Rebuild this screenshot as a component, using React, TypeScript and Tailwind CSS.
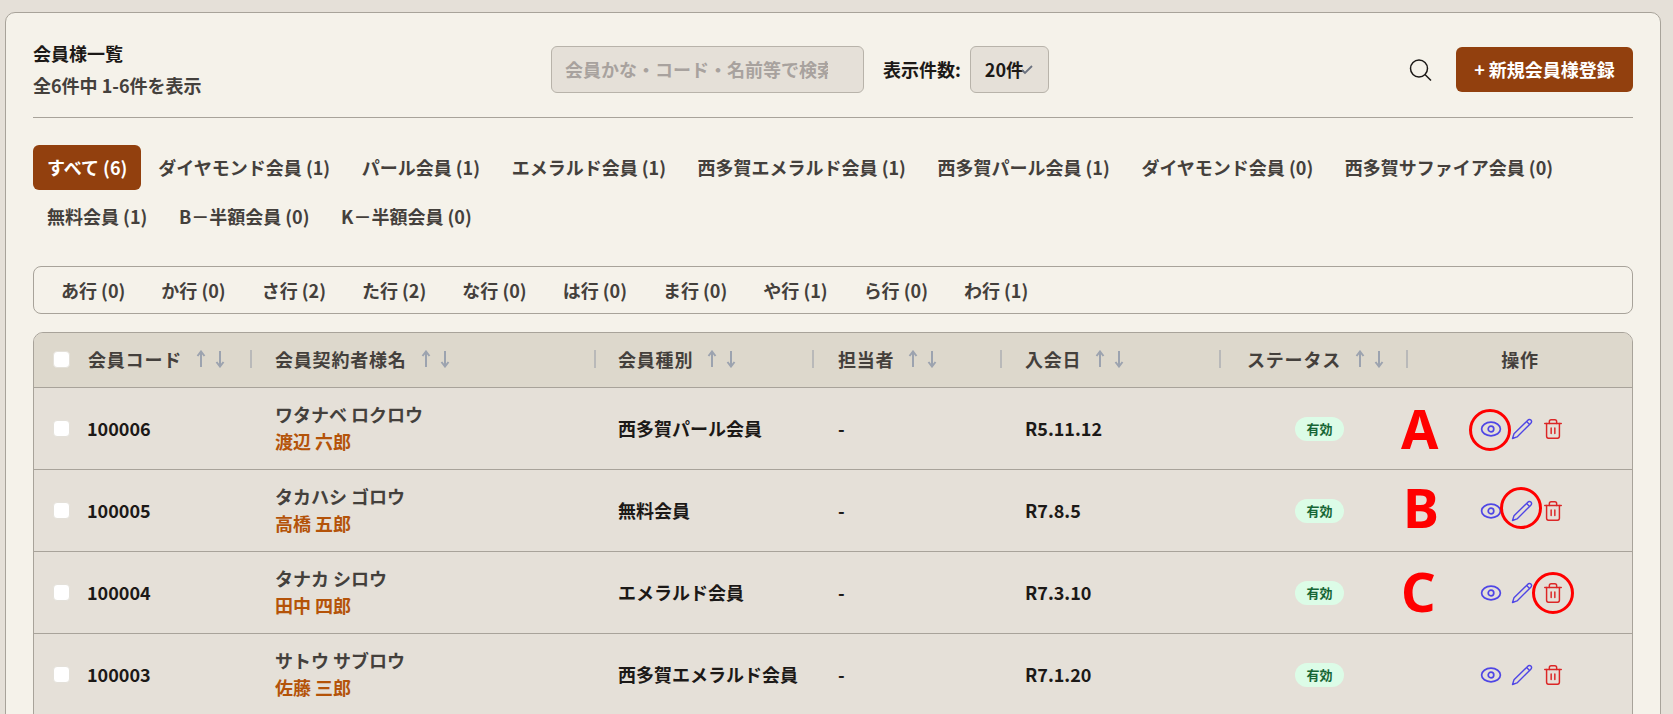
import { Trash2 } from "lucide-react";

const tabs = [
  "ダイヤモンド会員 (1)",
  "パール会員 (1)",
  "エメラルド会員 (1)",
  "西多賀エメラルド会員 (1)",
  "西多賀パール会員 (1)",
  "ダイヤモンド会員 (0)",
  "西多賀サファイア会員 (0)",
  "無料会員 (1)",
  "B－半額会員 (0)",
  "K－半額会員 (0)",
];

const kana = ["あ行 (0)", "か行 (0)", "さ行 (2)", "た行 (2)", "な行 (0)", "は行 (0)", "ま行 (0)", "や行 (1)", "ら行 (0)", "わ行 (1)"];

const rows = [
  { code: "100006", kana: "ワタナベ ロクロウ", name: "渡辺 六郎", type: "西多賀パール会員", date: "R5.11.12" },
  { code: "100005", kana: "タカハシ ゴロウ", name: "高橋 五郎", type: "無料会員", date: "R7.8.5" },
  { code: "100004", kana: "タナカ シロウ", name: "田中 四郎", type: "エメラルド会員", date: "R7.3.10" },
  { code: "100003", kana: "サトウ サブロウ", name: "佐藤 三郎", type: "西多賀エメラルド会員", date: "R7.1.20" },
  { code: "100002", kana: "", name: "", type: "", date: "" },
];

const gridCols = "grid grid-cols-[218px_344px_218px_188px_219px_187px_1fr]";

const SortArrows = () => (
  <svg width="30" height="18" viewBox="0 0 30 18" fill="none" stroke="#9ca3af" strokeWidth="2" className="ml-[14px]">
    <path d="M5 17V2M1.5 6L5 1.5L8.5 6" />
    <path d="M24 1V16M20.5 12L24 16.5L27.5 12" />
  </svg>
);

const Divider = () => <span className="w-[2px] h-[18px] bg-[#b9b9b9]" />;

const Checkbox = () => <span className="w-[17px] h-[17px] rounded-[4px] bg-white border border-[#e4e1da] shrink-0" />;

const EyeIcon = () => (
  <svg width="22" height="22" viewBox="0 0 22 22" fill="none" stroke="#4f46e5" strokeWidth="1.7">
    <ellipse cx="11" cy="11" rx="9.4" ry="6.8" />
    <circle cx="11" cy="11" r="2.8" />
  </svg>
);

const PenIcon = () => (
  <svg width="22" height="22" viewBox="0 0 22 22" fill="none" stroke="#4f46e5" strokeWidth="1.4" strokeLinejoin="round">
    <path d="M1.5 20.5L3 15.8L16.6 2.4C17.6 1.4 19 1.2 19.9 2.1C20.8 3 20.6 4.4 19.6 5.4L6 18.9L1.5 20.5Z" />
    <path d="M15.6 3.4L18.6 6.4" />
  </svg>
);

export default function App() {
  return (
    <div className="relative h-[714px] overflow-hidden bg-[#e5e0d8] pt-[12px] pl-[5px] pr-[12px] text-[#1c1917] font-['Noto_Sans_CJK_JP','Noto_Sans',sans-serif]">
      <div className="bg-[#f5f2ea] border border-[#a8a39a] rounded-[10px] px-[27px] pt-[21px] h-[860px]">
        {/* ヘッダー */}
        <div className="flex items-center h-[84px] border-b border-[#a8a39a] pb-[12px]">
          <div className="w-[518px] text-[18px] leading-[32px] pb-[2px]">
            <p className="font-bold">会員様一覧</p>
            <p className="font-semibold text-[#44403c]">全6件中 1-6件を表示</p>
          </div>
          <div className="w-[313px] h-[47px] bg-[#e5e0d8] border border-[#b8b3aa] rounded-[6px] flex items-center pl-[13px] pr-[35px] whitespace-nowrap text-[18px] font-semibold text-[#a8a29e]">
            <span className="overflow-hidden">会員かな・コード・名前等で検索</span>
          </div>
          <span className="ml-[19px] text-[18px] font-bold">表示件数:</span>
          <div className="relative ml-[9px] w-[79px] h-[47px] bg-[#e5e0d8] border border-[#b8b3aa] rounded-[6px] flex items-center pl-[14px] text-[18px] font-bold">
            20件
            <svg width="12" height="10" viewBox="0 0 12 10" fill="none" stroke="#6b7280" strokeWidth="1.8" className="absolute left-[50px] top-[18px]">
              <path d="M1 5L4 8L11 1" />
            </svg>
          </div>
          <svg width="24" height="24" viewBox="0 0 24 24" fill="none" stroke="#1c1917" strokeWidth="1.5" className="ml-auto mr-[24px]">
            <circle cx="11" cy="10.5" r="8.5" />
            <path d="M17 16.5L23 22.5" />
          </svg>
          <button className="w-[177px] h-[45px] bg-[#92400e] text-white rounded-[6px] text-[18px] font-bold">+ 新規会員様登録</button>
        </div>

        {/* 会員種別タブ */}
        <div className="flex flex-wrap gap-y-[4px] mt-[27px] text-[18px] font-semibold text-[#44403c]">
          <span className="h-[45px] px-[14px] flex items-center rounded-[6px] bg-[#92400e] text-white font-bold mr-[3px]">すべて (6)</span>
          {tabs.map((t, i) => (
            <span key={i} className="h-[45px] px-[14px] flex items-center mr-[3.6px]">{t}</span>
          ))}
        </div>

        {/* 行フィルタ */}
        <div className="mt-[27px] h-[48px] border border-[#a8a39a] rounded-[8px] flex items-center px-[13px] gap-[8px] text-[18px] font-semibold text-[#44403c]">
          {kana.map(k => (
            <span key={k} className="px-[14px]">{k}</span>
          ))}
        </div>

        {/* テーブル */}
        <div className="mt-[18px] border border-[#a8a39a] rounded-[10px] overflow-hidden bg-[#e5e0d8]">
          <div className={`${gridCols} h-[55px] pb-[2px] bg-[#ddd8cc] border-b border-[#a8a39a] text-[18px] font-bold tracking-[0.8px] text-[#44403c]`}>
            <div className="flex items-center pl-[19px] justify-between">
              <span className="flex items-center">
                <Checkbox />
                <span className="ml-[18px]">会員コード</span>
                <SortArrows />
              </span>
              <Divider />
            </div>
            <div className="flex items-center justify-between pl-[23px]">
              <span className="flex items-center">会員契約者様名<SortArrows /></span>
              <Divider />
            </div>
            <div className="flex items-center justify-between pl-[22px]">
              <span className="flex items-center">会員種別<SortArrows /></span>
              <Divider />
            </div>
            <div className="flex items-center justify-between pl-[24px]">
              <span className="flex items-center">担当者<SortArrows /></span>
              <Divider />
            </div>
            <div className="flex items-center justify-between pl-[23px]">
              <span className="flex items-center">入会日<SortArrows /></span>
              <Divider />
            </div>
            <div className="flex items-center justify-end">
              <span className="flex items-center mr-[21px]">ステータス<SortArrows /></span>
              <Divider />
            </div>
            <div className="flex items-center justify-center">操作</div>
          </div>
          {rows.map(r => (
            <div key={r.code} className={`${gridCols} h-[82px] border-b border-[#a8a39a] text-[18px]`}>
              <div className="flex items-center pl-[19px]">
                <Checkbox />
                <span className="ml-[17px] font-bold">{r.code}</span>
              </div>
              <div className="flex flex-col justify-center pl-[23px] pb-[2px] leading-[27px]">
                <span className="font-semibold text-[#44403c]">{r.kana}</span>
                <span className="font-semibold text-[#b45309]">{r.name}</span>
              </div>
              <div className="flex items-center pl-[22px] font-bold">{r.type}</div>
              <div className="flex items-center pl-[24px] font-bold">-</div>
              <div className="flex items-center pl-[23px] font-bold">{r.date}</div>
              <div className="flex items-center justify-center pl-[10px]">
                <span className="w-[49px] h-[24px] flex items-center justify-center rounded-full bg-[#dcfce7] text-[#166534] text-[13px] font-bold">有効</span>
              </div>
              <div className="flex items-center pl-[72px] gap-[9px]">
                <EyeIcon />
                <PenIcon />
                <Trash2 size={22} strokeWidth={1.6} className="text-[#dc2626]" />
              </div>
            </div>
          ))}
        </div>
      </div>

      {/* 注釈 */}
      <span className="absolute left-[1401px] top-[393px] text-[54px] leading-[70px] font-bold font-['Noto_Sans',sans-serif] text-[#ff0000]">A</span>
      <span className="absolute left-[1403px] top-[472px] text-[54px] leading-[70px] font-bold font-['Noto_Sans',sans-serif] text-[#ff0000]">B</span>
      <span className="absolute left-[1401px] top-[556px] text-[54px] leading-[70px] font-bold font-['Noto_Sans',sans-serif] text-[#ff0000]">C</span>
      <span className="absolute left-[1469px] top-[409px] w-[42px] h-[42px] rounded-full border-[3px] border-[#ff0000]" />
      <span className="absolute left-[1500px] top-[487px] w-[42px] h-[42px] rounded-full border-[3px] border-[#ff0000]" />
      <span className="absolute left-[1532px] top-[572px] w-[42px] h-[42px] rounded-full border-[3px] border-[#ff0000]" />
    </div>
  );
}
